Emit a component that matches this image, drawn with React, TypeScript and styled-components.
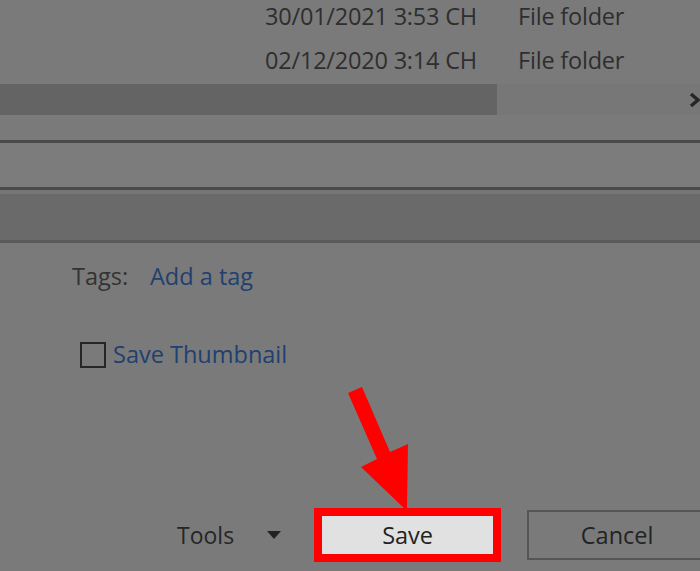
import React from "react";
import styled, { createGlobalStyle } from "styled-components";

const Global = createGlobalStyle`
  html, body { margin: 0; padding: 0; }
  body {
    background: #7a7a7a;
    font-family: "Open Sans", "Noto Sans", sans-serif;
    overflow: hidden;
  }
`;

const Page = styled.div`
  position: relative;
  width: 700px;
  height: 571px;
  overflow: hidden;
  background: #7a7a7a;
  display: flex;
  flex-direction: column;
`;

const FileList = styled.div`
  margin-top: -6px;
  display: flex;
  flex-direction: column;
`;

const FileRow = styled.div`
  height: 44px;
  display: flex;
  align-items: center;
  padding-left: 265px;
  font-size: 23.5px;
  color: #2e2e2e;
  letter-spacing: -0.2px;
  white-space: nowrap;
`;

const DateCell = styled.span`
  width: 253px;
`;

const Scrollbar = styled.div`
  margin-top: 2px;
  height: 31px;
  display: flex;
  align-items: center;
  background: #777777;
`;

const Thumb = styled.div`
  width: 497px;
  align-self: stretch;
  background: #646464;
`;

const ScrollArrow = styled.div`
  margin-left: auto;
  margin-right: -4px;
  width: 16px;
  height: 16px;
  display: flex;
`;

const Divider = styled.div<{ $h: number; $c: string; $mt?: number }>`
  height: ${(p) => p.$h}px;
  background: ${(p) => p.$c};
  margin-top: ${(p) => p.$mt ?? 0}px;
  flex-shrink: 0;
`;

const Meta = styled.div`
  padding-top: 18px;
  display: flex;
  flex-direction: column;
`;

const TagRow = styled.div`
  height: 30px;
  display: flex;
  align-items: center;
  padding-left: 72px;
  font-size: 23.5px;
  white-space: nowrap;
`;

const Label = styled.span`
  color: #333333;
  width: 78px;
`;

const LinkText = styled.span`
  color: #21406f;
`;

const CheckRow = styled.label`
  margin-top: 48px;
  height: 30px;
  display: flex;
  align-items: center;
  padding-left: 80px;
  gap: 7px;
  font-size: 23.5px;
  color: #21406f;
  white-space: nowrap;
`;

const Box = styled.span`
  width: 22px;
  height: 22px;
  border: 2px solid #262626;
  box-sizing: content-box;
  margin-top: 1px;
`;

const Footer = styled.div`
  margin-top: 139px;
  display: flex;
  align-items: center;
  padding-left: 177px;
`;

const ToolsText = styled.span`
  font-size: 23px;
  color: #262626;
`;

const Caret = styled.span`
  margin-left: 33px;
  width: 0;
  height: 0;
  border-left: 7px solid transparent;
  border-right: 7px solid transparent;
  border-top: 8px solid #222222;
`;

const Button = styled.div<{ $primary?: boolean }>`
  box-sizing: border-box;
  display: flex;
  align-items: center;
  justify-content: center;
  font-size: 23.5px;
  color: #232323;
  height: ${(p) => (p.$primary ? 54 : 50)}px;
  width: ${(p) => (p.$primary ? 187 : 180)}px;
  border: ${(p) => (p.$primary ? "8px solid #ff0000" : "2px solid #555555")};
  background: ${(p) => (p.$primary ? "#e1e1e1" : "#7a7a7a")};
  margin-left: ${(p) => (p.$primary ? 33 : 26)}px;
  flex-shrink: 0;
`;

const Annotation = styled.svg`
  position: absolute;
  left: 0;
  top: 0;
  width: 700px;
  height: 571px;
  pointer-events: none;
`;

export default function App() {
  return (
    <Page>
      <Global />
      <FileList>
        <FileRow>
          <DateCell>30/01/2021 3:53 CH</DateCell>
          <span>File folder</span>
        </FileRow>
        <FileRow>
          <DateCell>02/12/2020 3:14 CH</DateCell>
          <span>File folder</span>
        </FileRow>
      </FileList>
      <Scrollbar>
        <Thumb />
        <ScrollArrow>
          <svg width="16" height="16" viewBox="0 0 16 16">
            <path d="M3 2 L10 8 L3 14" fill="none" stroke="#262626" strokeWidth="3.4" />
          </svg>
        </ScrollArrow>
      </Scrollbar>
      <Divider $h={3} $c="#4a4a4a" $mt={25} />
      <Divider $h={44} $c="#7c7c7c" />
      <Divider $h={3} $c="#4a4a4a" />
      <Divider $h={4} $c="#767676" />
      <Divider $h={46} $c="#6a6a6a" />
      <Divider $h={3} $c="#5a5a5a" />
      <Meta>
        <TagRow>
          <Label>Tags:</Label>
          <LinkText>Add a tag</LinkText>
        </TagRow>
        <CheckRow>
          <Box />
          <span>Save Thumbnail</span>
        </CheckRow>
      </Meta>
      <Footer>
        <ToolsText>Tools</ToolsText>
        <Caret />
        <Button $primary>Save</Button>
        <Button>Cancel</Button>
      </Footer>
      <Annotation viewBox="0 0 700 571">
        <polygon
          points="348,393 362,387 390,452 408,444 407,511 361,467 377,459"
          fill="#ff0000"
        />
      </Annotation>
    </Page>
  );
}
